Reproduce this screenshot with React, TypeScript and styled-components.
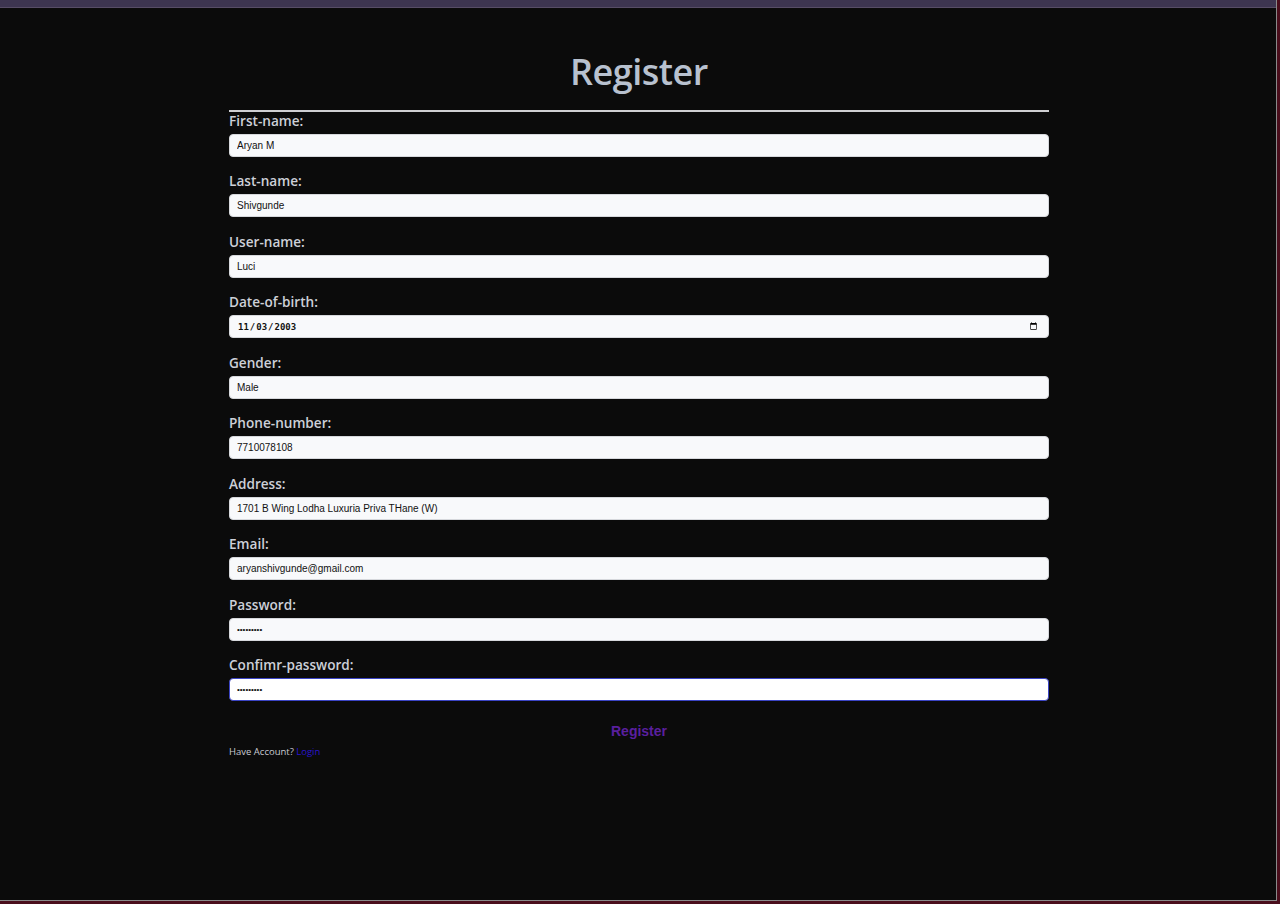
import React from "react";
import styled, { createGlobalStyle } from "styled-components";

const Global = createGlobalStyle`
  html, body { margin: 0; padding: 0; }
  body {
    background: #4a0e1c;
    width: 1280px;
    height: 904px;
    overflow: hidden;
    font-family: "Open Sans", "Noto Sans", sans-serif;
  }
`;

const Frame = styled.div`
  width: 1276px;
  height: 900px;
  background: #0b0b0b;
  border-right: 1px solid #8a8a8a;
  border-bottom: 1px solid #8a8a8a;
  display: flex;
  flex-direction: column;
`;

const TopBar = styled.div`
  height: 7px;
  background: #3d3550;
  border-bottom: 1px solid #574d66;
  flex: none;
`;

const Card = styled.form`
  width: 820px;
  margin: 0 0 0 229px;
  padding-top: 42px;
  display: flex;
  flex-direction: column;
`;

const Title = styled.h1`
  margin: 0;
  text-align: center;
  font-family: "Open Sans", sans-serif;
  font-weight: 600;
  font-size: 36px;
  line-height: 44px;
  color: #b8c1cf;
  letter-spacing: -0.5px;
`;

const Rule = styled.div`
  height: 2px;
  background: #cfcfd2;
  margin-top: 16px;
`;

const Fields = styled.div`
  display: flex;
  flex-direction: column;
  gap: 14.45px;
  margin-top: -1px;
`;

const Field = styled.div`
  display: flex;
  flex-direction: column;
  gap: 3px;
`;

const Label = styled.label`
  font-size: 13.6px;
  font-weight: 600;
  line-height: 20px;
  color: #cdd0d8;
`;

const Input = styled.input<{ $focused?: boolean }>`
  box-sizing: border-box;
  height: 23px;
  width: 100%;
  margin: 0;
  padding: 0 7px;
  border-radius: 4px;
  border: 1px solid ${(p) => (p.$focused ? "#3b44c4" : "#d6d8dc")};
  background: ${(p) => (p.$focused ? "#ffffff" : "#f8f9fb")};
  color: #111;
  font-family: "Liberation Sans", Arial, sans-serif;
  font-size: 10px;
  outline: none;
  &[type="date"] {
    font-family: "DejaVu Sans Mono", monospace;
    font-size: 9px;
    font-weight: 600;
    padding-right: 8px;
  }
  &[type="password"] {
    font-size: 8px;
    letter-spacing: 0px;
  }
`;

const Submit = styled.button`
  align-self: center;
  margin-top: 21px;
  background: none;
  border: none;
  padding: 0;
  color: #5a1f9e;
  font-family: "Liberation Sans", Arial, sans-serif;
  font-weight: 700;
  font-size: 14px;
  line-height: 18px;
  cursor: pointer;
`;

const Footer = styled.p`
  margin: 5px 0 0;
  font-size: 9.5px;
  line-height: 14px;
  color: #c9cad2;
`;

const LoginLink = styled.a`
  color: #2a14cf;
  text-decoration: none;
`;

const fields: { label: string; type: string; value: string; focused?: boolean }[] = [
  { label: "First-name:", type: "text", value: "Aryan M" },
  { label: "Last-name:", type: "text", value: "Shivgunde" },
  { label: "User-name:", type: "text", value: "Luci" },
  { label: "Date-of-birth:", type: "date", value: "2003-11-03" },
  { label: "Gender:", type: "text", value: "Male" },
  { label: "Phone-number:", type: "text", value: "7710078108" },
  { label: "Address:", type: "text", value: "1701 B Wing Lodha Luxuria Priva THane (W)" },
  { label: "Email:", type: "email", value: "aryanshivgunde@gmail.com" },
  { label: "Password:", type: "password", value: "Luci12345" },
  { label: "Confimr-password:", type: "password", value: "Luci12345", focused: true },
];

export default function App() {
  return (
    <>
      <Global />
      <Frame>
        <TopBar />
        <Card onSubmit={(e) => e.preventDefault()}>
          <Title>Register</Title>
          <Rule />
          <Fields>
            {fields.map((f, i) => (
              <Field key={f.label}>
                <Label htmlFor={`f${i}`}>{f.label}</Label>
                <Input id={`f${i}`} type={f.type} defaultValue={f.value} $focused={f.focused} />
              </Field>
            ))}
          </Fields>
          <Submit type="submit">Register</Submit>
          <Footer>
            Have Account? <LoginLink href="#">Login</LoginLink>
          </Footer>
        </Card>
      </Frame>
    </>
  );
}
